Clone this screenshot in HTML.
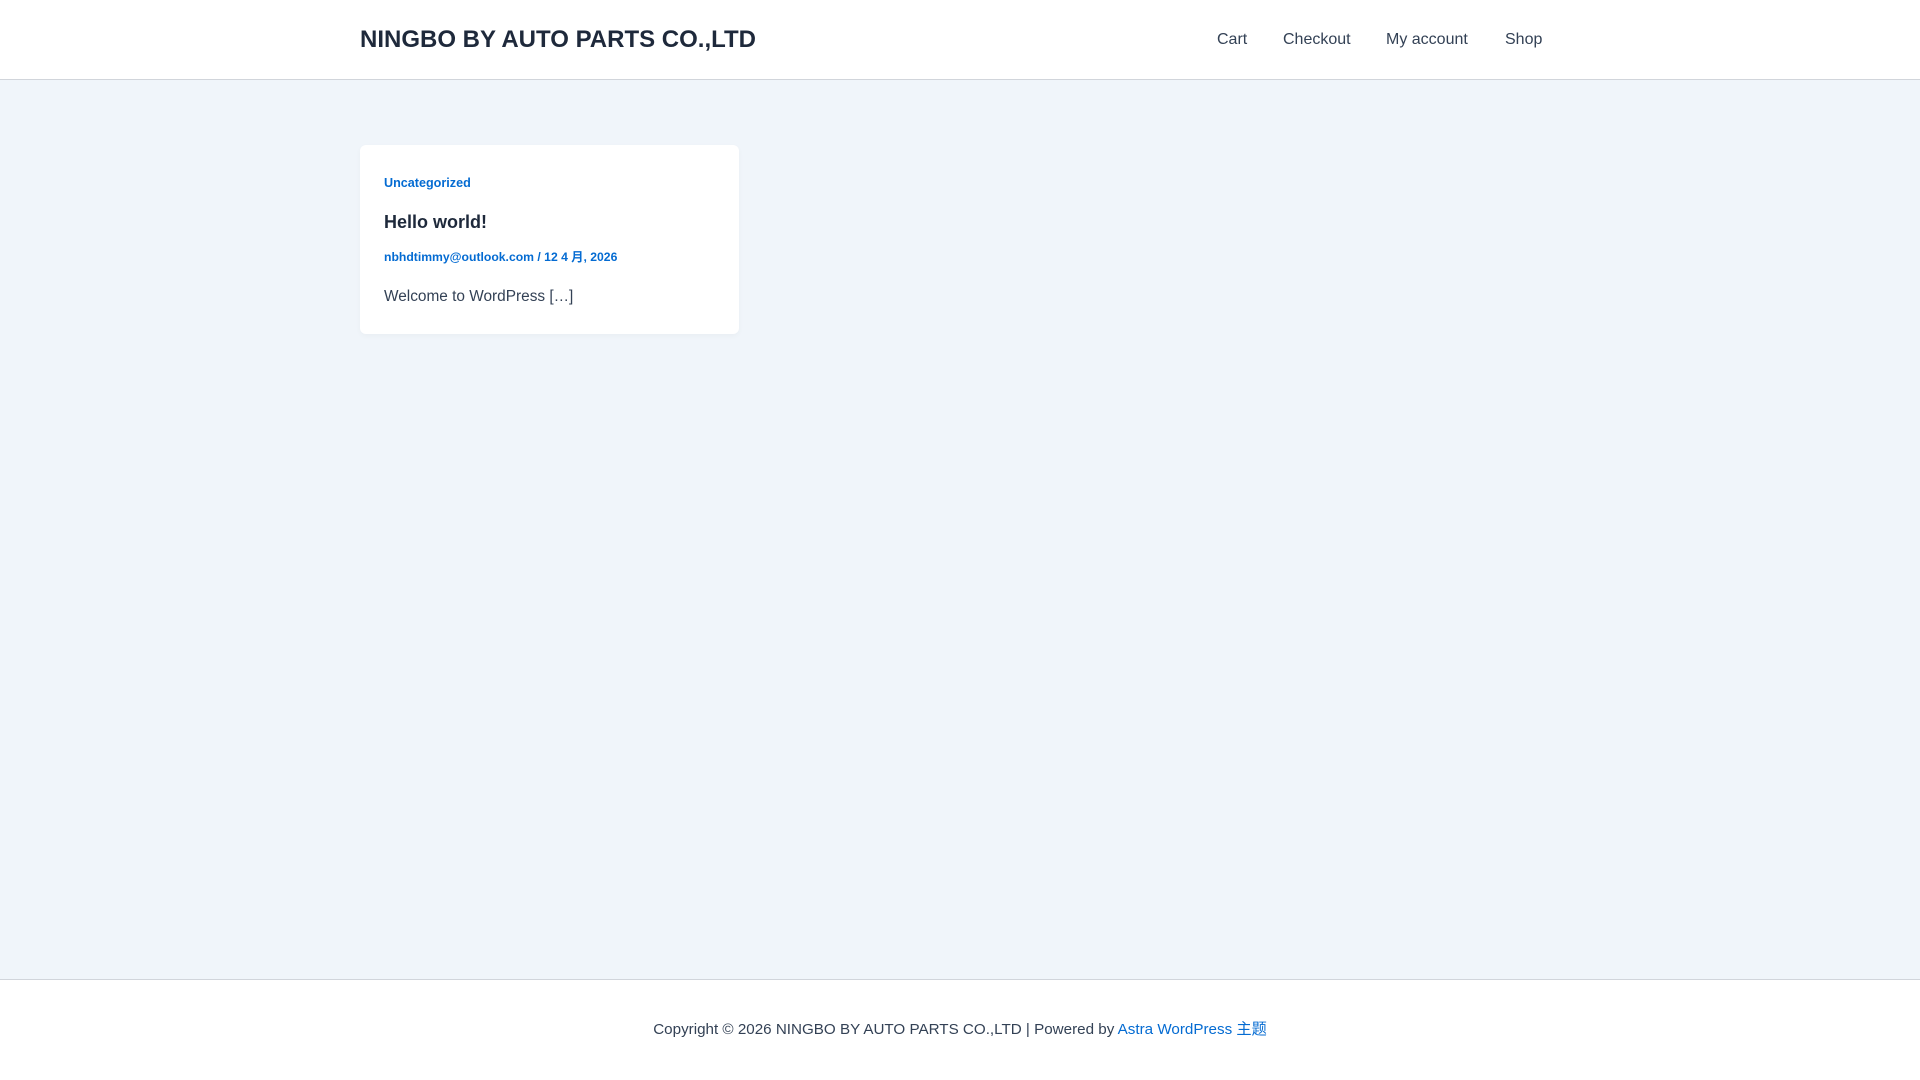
<!DOCTYPE html>
<html><head><meta charset="utf-8"><style>
*{margin:0;padding:0;box-sizing:border-box}
body{width:1920px;height:1080px;background:#f0f5fa;font-family:"Liberation Sans","Noto Sans CJK SC",sans-serif;color:#334155;position:relative;overflow:hidden}
header{position:absolute;top:0;left:0;right:0;height:80px;background:#fff;border-bottom:1px solid #d1d5db}
.logo{position:absolute;left:360px;top:26px;font-size:24px;font-weight:bold;color:#1e293b}
nav{position:absolute;top:31px;font-size:16px;color:#334155}
nav span{position:absolute;white-space:nowrap}
.card{position:absolute;left:360px;top:145px;width:379px;height:189px;background:#fff;border-radius:6px;box-shadow:0 2px 6px rgba(0,0,0,0.03)}
.cat{position:absolute;left:24px;top:31px;font-size:12.6px;font-weight:bold;color:#046bd2}
.t{position:absolute;left:24px;top:67px;font-size:18px;font-weight:bold;color:#1e293b}
.meta{position:absolute;left:24px;top:102px;font-size:12.2px;font-weight:bold;color:#046bd2;white-space:nowrap}
.ex{position:absolute;left:24px;top:143px;font-size:15.4px;color:#334155}
footer{position:absolute;top:979px;left:0;right:0;bottom:0;background:#fff;border-top:1px solid #d1d5db}
.ft{position:absolute;top:37px;left:0;width:1920px;text-align:center;font-size:15.2px;color:#334155}
.ft a{color:#046bd2;text-decoration:none}
</style></head><body>
<header><div class="logo">NINGBO BY AUTO PARTS CO.,LTD</div>
<nav><span style="left:1217px">Cart</span><span style="left:1283px">Checkout</span><span style="left:1386px">My account</span><span style="left:1505px">Shop</span></nav></header>
<div class="card"><div class="cat">Uncategorized</div><div class="t">Hello world!</div><div class="meta">nbhdtimmy@outlook.com / 12 4 月, 2026</div><div class="ex">Welcome to WordPress […]</div></div>
<footer><div class="ft">Copyright © 2026 NINGBO BY AUTO PARTS CO.,LTD | Powered by <a>Astra WordPress 主题</a></div></footer>
</body></html>
